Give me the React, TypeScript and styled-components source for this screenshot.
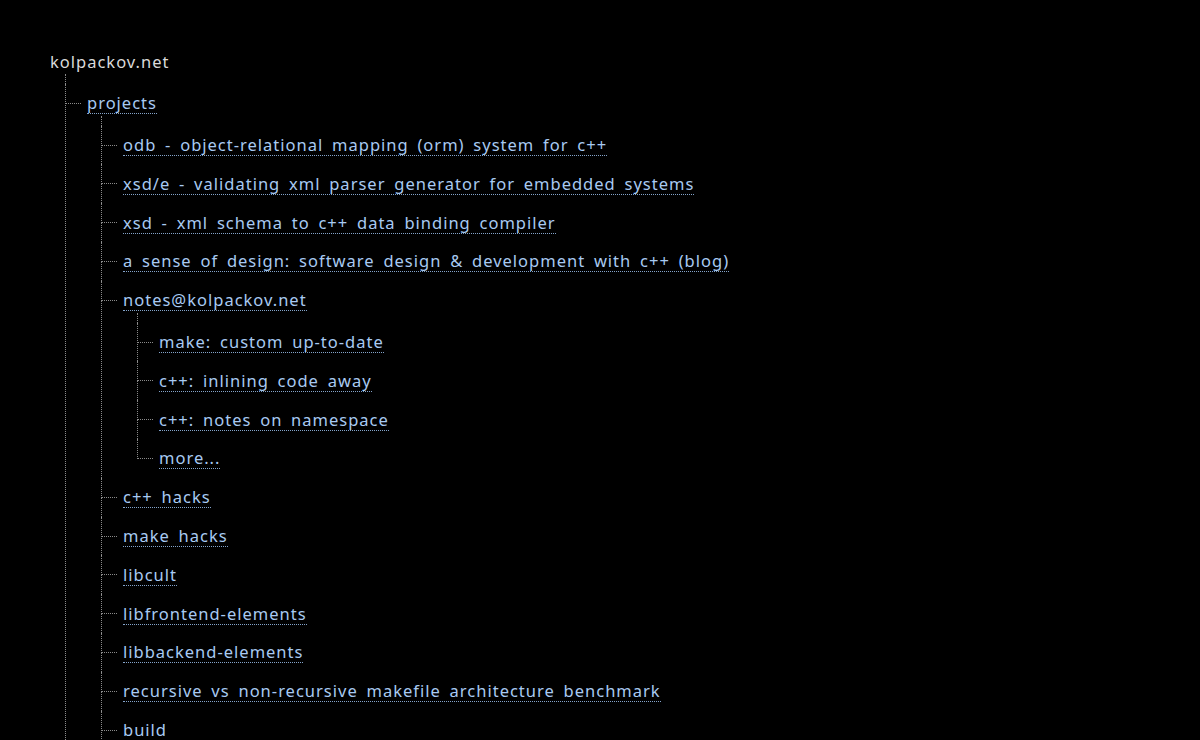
import styled, { createGlobalStyle } from "styled-components";

const GlobalStyle = createGlobalStyle`
    html, body {
        margin: 0;
        padding: 0;
        background: #000;
    }

    body {
        font-family: "Noto Sans", "Open Sans", sans-serif;
        font-size: 16.5px;
        letter-spacing: 1px;
        word-spacing: 3.5px;
        color: #dcdcdc;
    }
`;

const Page = styled.div`
    padding: 42px 0 0 50px;
    height: 740px;
    overflow: hidden;
    box-sizing: border-box;
`;

const Row = styled.div`
    height: 38.8px;
    display: flex;
    align-items: center;
`;

const RootLabel = styled.span`
    color: #dadada;
`;

const Link = styled.a`
    color: #a8caf2;
    text-decoration: none;
    border-bottom: 1px dotted #83a3ca;
    line-height: 21px;
    cursor: pointer;
`;

const Tree = styled.ul`
    list-style: none;
    margin: 0 0 0 15px;
    padding: 3px 0 0 0;
    position: relative;

    &::before {
        content: "";
        position: absolute;
        left: 0;
        top: -7px;
        height: 10px;
        border-left: 1px dotted #8a8a8a;
    }

    & & {
        margin-left: 14px;
    }
`;

const Node = styled.li`
    position: relative;
    padding-left: 22px;

    &::before {
        content: "";
        position: absolute;
        left: 0;
        top: 0;
        width: 15px;
        height: 19px;
        border-left: 1px dotted #8a8a8a;
        border-bottom: 1px dotted #8a8a8a;
    }

    &:not(:last-child)::after {
        content: "";
        position: absolute;
        left: 0;
        top: 19px;
        bottom: 0;
        border-left: 1px dotted #8a8a8a;
    }
`;

type Item = { label: string; children?: Item[] };

const tree: Item[] = [
    {
        label: "projects",
        children: [
            { label: "odb - object-relational mapping (orm) system for c++" },
            { label: "xsd/e - validating xml parser generator for embedded systems" },
            { label: "xsd - xml schema to c++ data binding compiler" },
            { label: "a sense of design: software design & development with c++ (blog)" },
            {
                label: "notes@kolpackov.net",
                children: [
                    { label: "make: custom up-to-date" },
                    { label: "c++: inlining code away" },
                    { label: "c++: notes on namespace" },
                    { label: "more..." },
                ],
            },
            { label: "c++ hacks" },
            { label: "make hacks" },
            { label: "libcult" },
            { label: "libfrontend-elements" },
            { label: "libbackend-elements" },
            { label: "recursive vs non-recursive makefile architecture benchmark" },
            { label: "build" },
            { label: "cli - command line interface compiler for c++" },
        ],
    },
    { label: "resume" },
];

function Branch({ items }: { items: Item[] }) {
    return (
        <Tree>
            {items.map((item) => (
                <Node key={item.label}>
                    <Row>
                        <Link>{item.label}</Link>
                    </Row>
                    {item.children && <Branch items={item.children} />}
                </Node>
            ))}
        </Tree>
    );
}

export default function App() {
    return (
        <>
            <GlobalStyle />
            <Page>
                <Row>
                    <RootLabel>kolpackov.net</RootLabel>
                </Row>
                <Branch items={tree} />
            </Page>
        </>
    );
}
